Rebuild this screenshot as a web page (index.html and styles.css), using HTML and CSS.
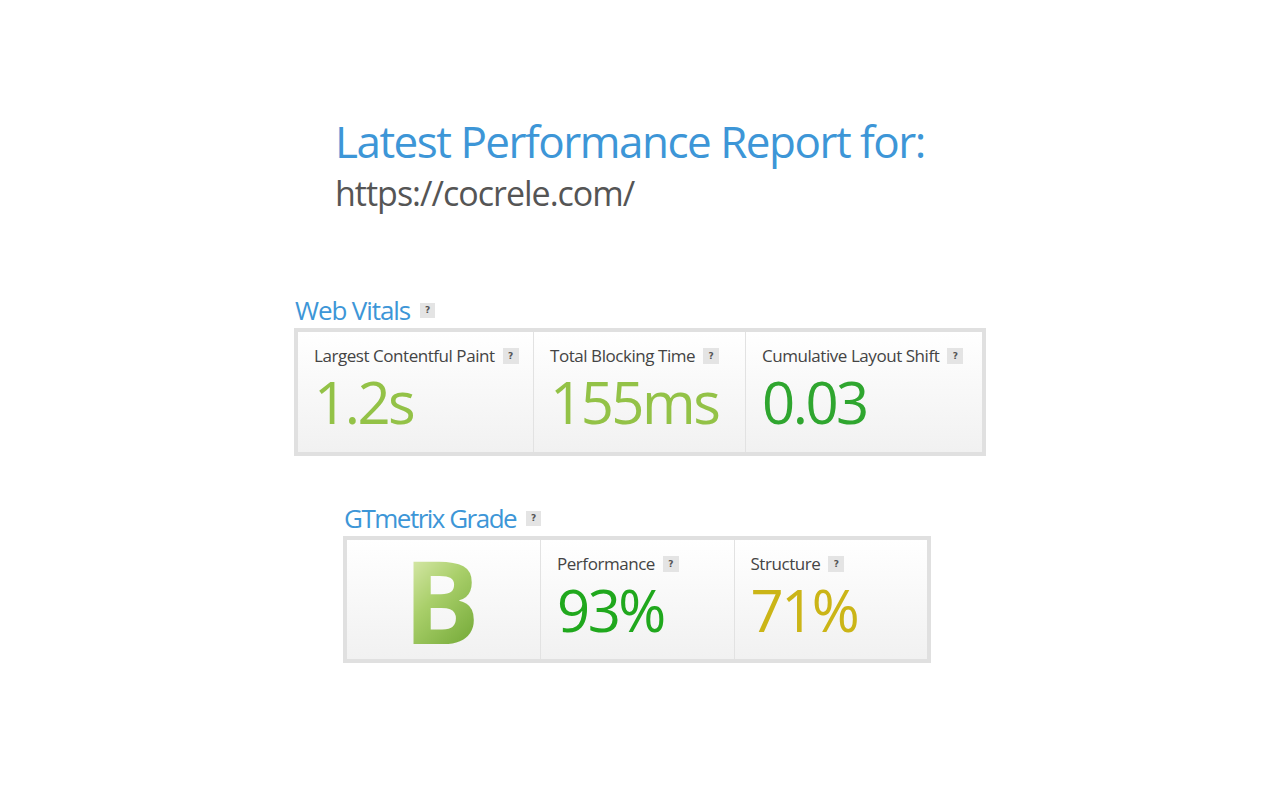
FILE: index.html
```html
<!DOCTYPE html>
<html lang="en">
<head>
<meta charset="utf-8">
<title>Latest Performance Report</title>
<link rel="stylesheet" href="styles.css">
</head>
<body>
<main class="page">
  <header class="report-head">
    <h1 class="report-title">Latest Performance Report for:</h1>
    <div class="report-url">https://cocrele.com/</div>
  </header>

  <section class="vitals">
    <h2 class="section-title">Web Vitals <span class="help">?</span></h2>
    <div class="panel vitals-panel">
      <div class="cell cell-lcp">
        <div class="label">Largest Contentful Paint <span class="help">?</span></div>
        <div class="value c-lightgreen">1.2s</div>
      </div>
      <div class="cell cell-tbt">
        <div class="label">Total Blocking Time <span class="help">?</span></div>
        <div class="value c-lightgreen">155ms</div>
      </div>
      <div class="cell cell-cls">
        <div class="label">Cumulative Layout Shift <span class="help">?</span></div>
        <div class="value c-green">0.03</div>
      </div>
    </div>
  </section>

  <section class="grade">
    <h2 class="section-title">GTmetrix Grade <span class="help">?</span></h2>
    <div class="panel grade-panel">
      <div class="cell grade-cell"><span class="grade-letter">B</span></div>
      <div class="cell">
        <div class="label">Performance <span class="help">?</span></div>
        <div class="value c-green2">93%</div>
      </div>
      <div class="cell">
        <div class="label">Structure <span class="help">?</span></div>
        <div class="value c-yellow">71%</div>
      </div>
    </div>
  </section>
</main>
</body>
</html>
```

FILE: styles.css
```css
* { box-sizing: border-box; }

html, body {
  margin: 0;
  padding: 0;
  background: #ffffff;
}

body {
  font-family: "Open Sans", "Noto Sans", sans-serif;
  color: #444444;
}

.page {
  width: 1280px;
  height: 800px;
  padding-top: 113px;
}

.report-head {
  margin-left: 335px;
}

.report-title {
  margin: 0;
  font-size: 44px;
  font-weight: 400;
  line-height: 56px;
  letter-spacing: -1.5px;
  color: #3d96d7;
}

.report-url {
  margin-top: 2px;
  font-size: 34px;
  line-height: 44px;
  letter-spacing: -1px;
  color: #555555;
}

.section-title {
  margin: 0 0 2px 1px;
  display: flex;
  align-items: center;
  gap: 10px;
  font-size: 26px;
  font-weight: 400;
  line-height: 32px;
  letter-spacing: -1.1px;
  color: #3d96d7;
}

.help {
  display: inline-flex;
  align-items: center;
  justify-content: center;
  width: 15px;
  height: 15px;
  background: #e4e4e4;
  color: #555555;
  font-family: "DejaVu Sans", sans-serif;
  font-size: 9px;
  font-weight: 700;
  line-height: 1;
  letter-spacing: 0;
}

.vitals {
  margin-left: 294px;
  margin-top: 79px;
}

.grade {
  margin-left: 343px;
  margin-top: 46px;
}

.grade .section-title {
  letter-spacing: -1.5px;
}

.panel {
  display: flex;
  border: 4px solid #e0e0e0;
  background: linear-gradient(to bottom, #ffffff 0%, #f1f1f1 100%);
}

.vitals-panel {
  width: 692px;
  height: 128px;
}

.grade-panel {
  width: 588px;
  height: 127px;
}

.cell {
  padding: 14px 8px 0 16px;
  border-left: 1px solid #e2e2e2;
}

.cell:first-child {
  border-left: none;
}

.cell-lcp { width: 235px; }
.cell-tbt { width: 212px; }
.cell-cls { flex: 1; }

.grade-panel .cell { flex: 1; }
.grade-panel .cell:first-child { width: 193px; flex: none; }

.label {
  display: flex;
  align-items: center;
  gap: 8px;
  white-space: nowrap;
  font-size: 17px;
  line-height: 20px;
  letter-spacing: -0.45px;
  color: #444444;
}

.label .help {
  width: 16px;
  height: 16px;
}

.value {
  margin-top: 6px;
  font-size: 58px;
  line-height: 60px;
  letter-spacing: -2.5px;
  font-weight: 400;
  white-space: nowrap;
}

.c-lightgreen { color: #93c247; }
.c-green { color: #2fa62f; }
.c-green2 { color: #20a81d; }
.c-yellow { color: #cbb517; }

.grade-cell {
  display: flex;
  align-items: center;
  justify-content: center;
  padding: 0;
}

.grade-letter {
  font-family: "Open Sans", sans-serif;
  font-size: 114px;
  font-weight: 700;
  line-height: 1;
  margin-right: 4px;
  background: linear-gradient(135deg, #e8f1c0 0%, #a9cf6a 45%, #68a12c 100%);
  -webkit-background-clip: text;
  background-clip: text;
  color: transparent;
}
```
